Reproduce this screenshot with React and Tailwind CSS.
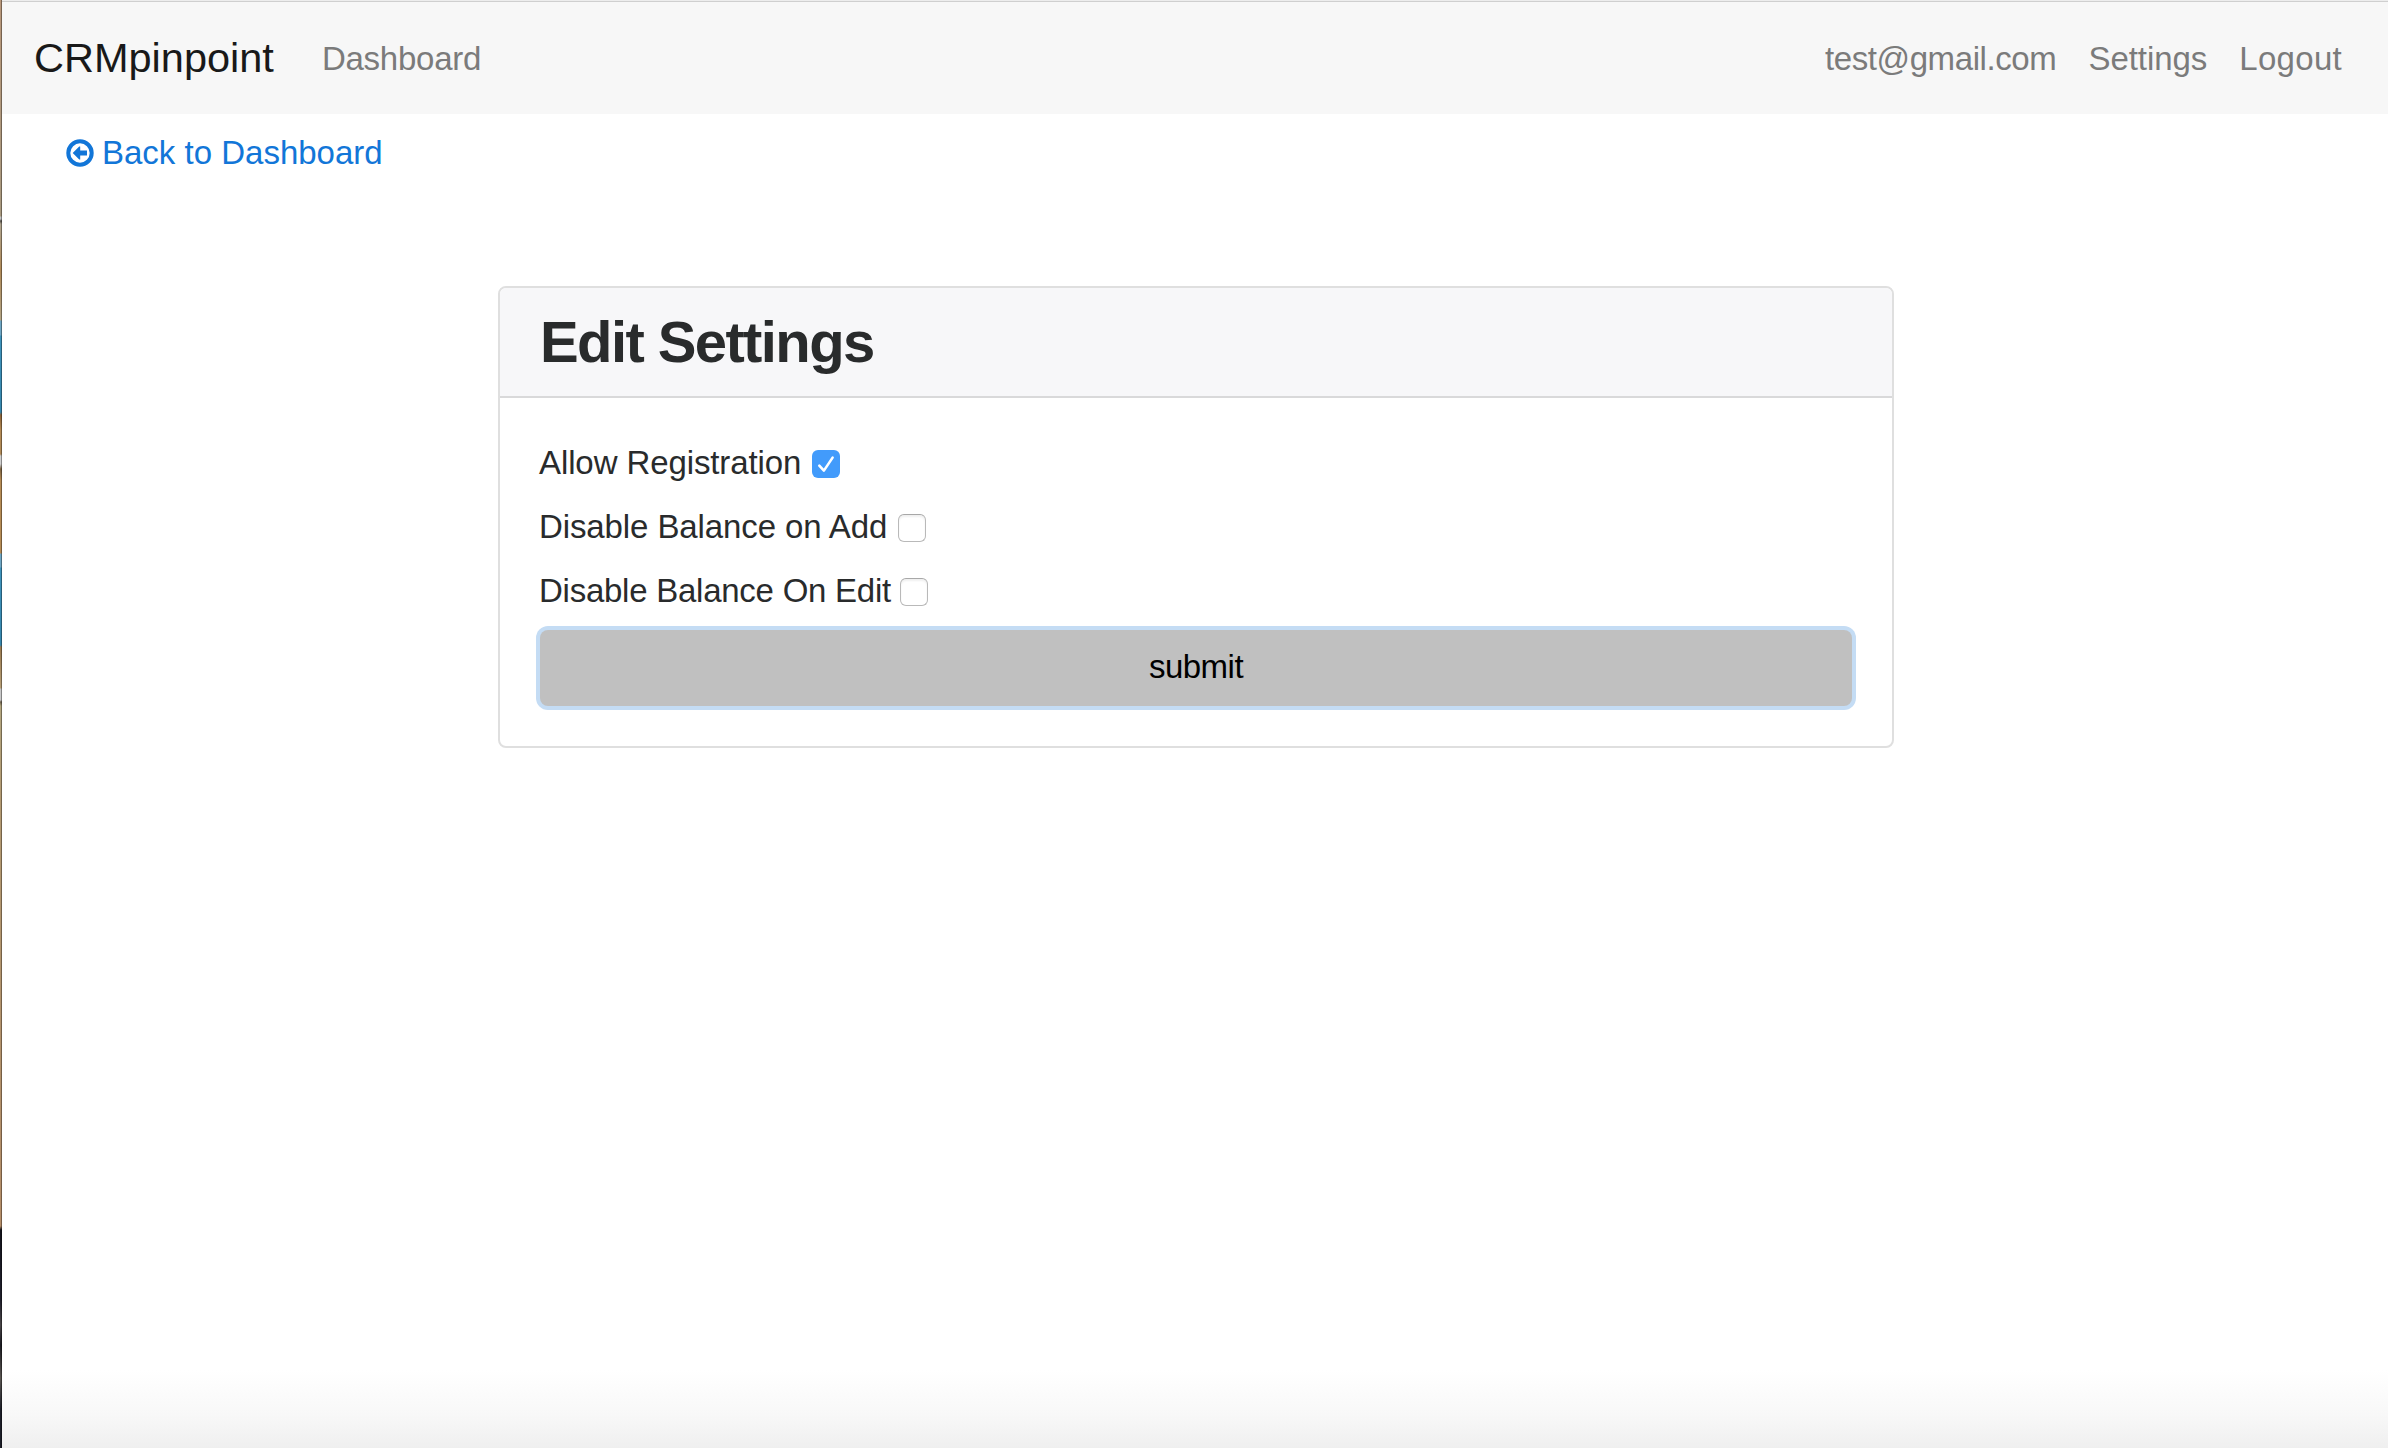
function Check({ checked }) {
  return checked ? (
    <span className="block h-7 w-7 rounded-md bg-[#429bfb]">
      <svg viewBox="0 0 28 28" className="h-7 w-7" fill="none" stroke="white" strokeWidth="2.6" strokeLinecap="round" strokeLinejoin="round">
        <path d="M7.3 15.7 L11.9 20.6 L20.6 7.6" />
      </svg>
    </span>
  ) : (
    <span className="block h-7 w-7 rounded-md border border-[#b9b9b9] border-t-[#a8a8a8] bg-white shadow-[inset_0_2px_2px_#f0f0f0]" />
  );
}

function Row({ label, checked, spacing }) {
  return (
    <label className="mb-4 flex h-12 items-center">
      <span className={spacing}>{label}</span>
      <span className="mt-1">
        <Check checked={checked} />
      </span>
    </label>
  );
}

export default function App() {
  return (
    <div className="flex h-[1448px] w-[2388px] overflow-hidden bg-white font-['Liberation_Sans',Arial,sans-serif] text-[33px] leading-[48px] text-[#292b2c]">
      <div className="w-0.5 shrink-0 border-r border-black/35 bg-[linear-gradient(to_bottom,#b8977a_0px,#a99a80_216px,#c4c4c4_217px,#c4c4c4_219px,#55504a_221px,#b0a590_224px,#b08a58_270px,#b3a485_320px,#6ea6c4_321px,#6ea6c4_335px,#3f94bd_336px,#3787ae_412px,#8a6238_415px,#b48a55_430px,#b08a58_454px,#cfcfcf_456px,#cfcfcf_464px,#7d6545_469px,#b58b55_480px,#b58b55_553px,#6ea6c4_554px,#6ea6c4_567px,#3f94bd_568px,#3787ae_645px,#9a7a50_647px,#b8a078_688px,#c8c8c8_689px,#c8c8c8_700px,#6e6350_702px,#b3a680_706px,#b39a72_800px,#b48d68_1226px,#15151d_1230px,#20202c_1300px,#4a4648_1325px,#1c1c22_1345px,#5a5652_1378px,#1c1e28_1410px,#1c1e28_1448px)]" />
      <div className="flex min-w-0 flex-1 flex-col bg-[linear-gradient(to_bottom,white_1370px,#f8f8f8_1415px,#efefef_1448px)]">
        <nav className="flex h-[114px] shrink-0 items-center border-t border-[#ededed] bg-[#f7f7f7] px-8 shadow-[inset_0_1px_0_#cfcfcf]">
          <span className="text-[41.5px] leading-[60px] text-[#191919]">CRMpinpoint</span>
          <span className="ml-12 pt-0.5 tracking-[-0.25px] text-[#7b7b7b]">Dashboard</span>
          <div className="mr-3.5 ml-auto flex gap-8 pt-0.5 text-[#7b7b7b]">
            <span className="tracking-[-0.4px]">test@gmail.com</span>
            <span className="tracking-[-0.05px]">Settings</span>
            <span className="tracking-[0.3px]">Logout</span>
          </div>
        </nav>
        <a className="mt-[15px] ml-16 flex h-12 items-center gap-2 text-[#1276d8]">
          <svg viewBox="0 0 28 28" className="h-7 w-7" fill="currentColor">
            <circle cx="14" cy="14" r="11.7" fill="none" stroke="currentColor" strokeWidth="4" />
            <path d="M6.7 14 L13.2 7.5 H14.2 V11.4 H21 V16.6 H14.2 V20.5 H13.2 Z" />
          </svg>
          <span>Back to Dashboard</span>
        </a>
        <main className="mt-[109px] ml-[496px] w-[1396px] rounded-lg border-2 border-[#dfdfdf] bg-white">
          <header className="flex h-[110px] items-center rounded-t-md border-b-2 border-[#d9d9da] bg-[#f7f7f9] px-10">
            <h1 className="text-[58px] leading-[62px] font-bold tracking-[-1.6px]">Edit Settings</h1>
          </header>
          <form className="p-10">
            <Row label="Allow Registration" spacing="w-[272px] -ml-px mr-px pt-0.5 whitespace-nowrap tracking-[-0.1px]" checked />
            <Row label="Disable Balance on Add" spacing="w-[358px] -ml-px mr-px pt-0.5 whitespace-nowrap tracking-[-0.1px]" />
            <Row label="Disable Balance On Edit" spacing="w-[360px] -ml-px mr-px pt-0.5 whitespace-nowrap tracking-[-0.25px]" />
            <button type="button" className="flex h-[76px] w-full items-center justify-center rounded-lg bg-[#c0c0c0] pb-0.5 tracking-[-0.5px] text-black ring-4 ring-[#c4dcf4]">
              submit
            </button>
          </form>
        </main>
      </div>
    </div>
  );
}
